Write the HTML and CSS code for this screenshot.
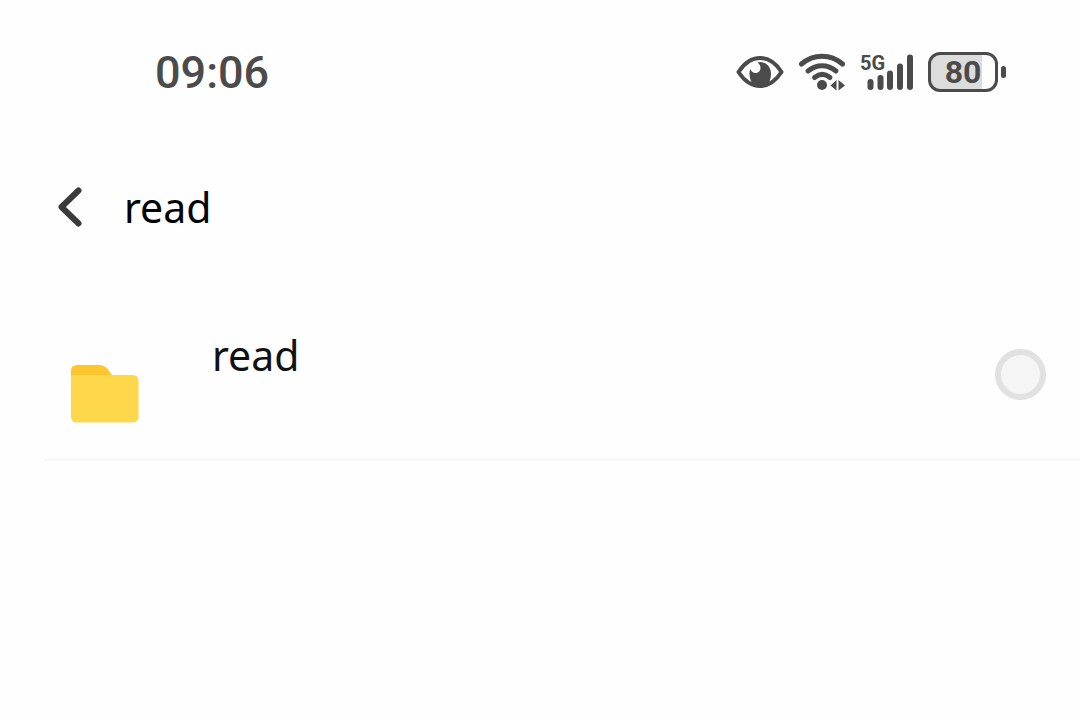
FILE: index.html
```html
<!DOCTYPE html>
<html lang="en">
<head>
    <meta charset="UTF-8">
    <meta name="viewport" content="width=device-width, initial-scale=1.0">
    <title>read</title>
    <link rel="stylesheet" href="styles.css">
</head>
<body>

<div class="status-bar">
    <time class="clock">09:06</time>
    <div class="status-icons">
        <svg class="eye" width="48" height="40" viewBox="0 0 48 40" aria-hidden="true">
            <path d="M2.500 20C8 11.500 15 6 24 6s16 5.500 21.500 14C40 28.500 33 34 24 34S8 28.500 2.500 20z" fill="none" stroke="#4b4b4b" stroke-width="4" stroke-linejoin="round"/>
            <path d="M24 10c6.500 0 11 5 11 11.500 0 5-1.500 9-4 12H18c-3-3-4.500-7-4.500-12 0-1.500.2-3 .8-4.500 1 2.500 3 4 5.200 4 3 0 5-2.200 5-5 0-2.200-1-4-3-5.500.8-.3 1.600-.5 2.500-.5z" fill="#4b4b4b"/>
        </svg>
        <svg class="wifi" width="48" height="40" viewBox="0 0 48 40" aria-hidden="true">
            <g fill="none" stroke="#4b4b4b" stroke-width="5" stroke-linecap="round">
                <path d="M3.500 12c12-10.500 29-10.500 41 0"/>
                <path d="M10 19c8.500-7 19.500-7 28 0"/>
                <path d="M16.500 25.500c5-4 10.500-4 15.500 0"/>
            </g>
            <circle cx="24" cy="33" r="5" fill="#4b4b4b"/>
            <path d="M38.500 28v10.500L32.500 33.500zM40.500 28v10.500L47 33.500z" fill="#4b4b4b"/>
        </svg>
        <div class="signal">
            <span class="network">5G</span>
            <svg width="54" height="40" viewBox="0 0 54 40" aria-hidden="true">
                <g stroke="#4b4b4b" stroke-width="6" stroke-linecap="round">
                    <path d="M10.500 30v5"/>
                    <path d="M20.500 26V35"/>
                    <path d="M30 21.500V35"/>
                    <path d="M40 14.500V35"/>
                    <path d="M50 5.500V35"/>
                </g>
            </svg>
        </div>
        <div class="battery">
            <div class="battery-body">80</div>
            <div class="battery-cap"></div>
        </div>
    </div>
</div>

<header class="title-bar">
    <button class="back" type="button" aria-label="Back">
        <svg width="24" height="40" viewBox="0 0 24 40" aria-hidden="true">
            <path d="M20.500 3.500L3.500 20l17 16.500" fill="none" stroke="#3a3a3a" stroke-width="6" stroke-linecap="round" stroke-linejoin="round"/>
        </svg>
    </button>
    <h1>read</h1>
</header>

<ul class="file-list">
    <li class="file">
        <svg class="folder" width="68" height="60" viewBox="0 0 68 60" aria-hidden="true">
            <path d="M0 7q0-6 6-6h22q5 0 8.500 4l4.500 6v14H0z" fill="#fcc62c"/>
            <path d="M0 11h61.500q6 0 6 6v35.500q0 6-6 6H6q-6 0-6-6z" fill="#fed74b"/>
        </svg>
        <label class="file-name" for="file-read">read</label>
        <input class="file-check" type="checkbox" id="file-read">
    </li>
</ul>

</body>
</html>
```

FILE: styles.css
```css
* {
    box-sizing: border-box;
    margin: 0;
    padding: 0;
}

body {
    font-family: "Noto Sans", "Open Sans", sans-serif;
    background-color: #fefefe;
    color: #111;
}

/* Status bar */
.status-bar {
    display: flex;
    justify-content: space-between;
    align-items: center;
    height: 144px;
    padding: 0 74px 0 155px;
    color: #4b4b4b;
    font-family: Roboto, sans-serif;
}

.clock {
    font-size: 45px;
    font-weight: 500;
}

.status-icons {
    display: flex;
    align-items: center;
    gap: 14px;
}

.signal {
    position: relative;
    height: 40px;
}

.network {
    position: absolute;
    top: 0;
    left: 0;
    font-size: 20px;
    font-weight: 700;
    line-height: 22px;
}

.battery {
    display: flex;
    align-items: center;
    gap: 3px;
}

.battery-body {
    width: 70px;
    height: 40px;
    border: 3px solid #4b4b4b;
    border-radius: 12px;
    background: linear-gradient(to right, #dcdcdc 80%, #fefefe 80%);
    font-size: 32px;
    font-weight: 700;
    line-height: 35px;
    text-align: center;
}

.battery-cap {
    width: 5px;
    height: 12px;
    border-radius: 3px;
    background-color: #4b4b4b;
}

/* Title bar */
.title-bar {
    display: flex;
    align-items: center;
    gap: 42px;
    height: 126px;
    padding: 0 58px;
}

.back {
    height: 40px;
    border: none;
    background: none;
    cursor: pointer;
}

h1,
.file-name {
    font-size: 41px;
    font-weight: 400;
    line-height: 56px;
}

h1 {
    color: #000;
}

/* File list */
.file-list {
    list-style: none;
    padding-left: 44px;
}

.file {
    display: flex;
    align-items: flex-start;
    padding: 57px 34px 34px 27px;
    border-bottom: 3px solid #f7f7f7;
}

.folder {
    margin-top: 37px;
}

.file-name {
    flex: 1;
    padding-left: 73px;
}

.file-check {
    appearance: none;
    width: 51px;
    height: 51px;
    margin-top: 22px;
    border: 6px solid #e1e1e1;
    border-radius: 50%;
    background-color: #f5f5f5;
    cursor: pointer;
}

.file-check:checked {
    background-color: #fed74b;
}
```
